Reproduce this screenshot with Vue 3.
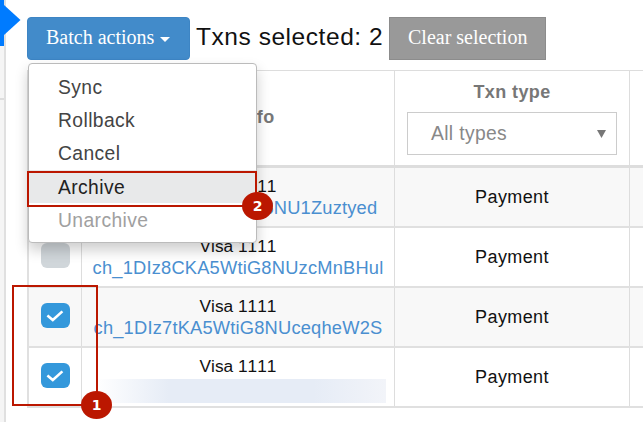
<template>
  <div class="page">
    <aside class="sidebar">
      <div class="sidebar-active"></div>
      <div class="sidebar-item"></div>
      <svg class="sidebar-arrow" width="17" height="30" viewBox="0 0 17 30">
        <path d="M0 0L16.5 15L0 30Z" fill="#007bff" />
      </svg>
    </aside>

    <main class="content">
      <div class="toolbar">
        <div class="batch">
          <button class="btn btn-primary">
            Batch actions <span class="caret"></span>
          </button>
          <ul class="menu">
            <li
              v-for="a in actions"
              :key="a.label"
              :class="{ active: a.active, disabled: a.disabled }"
            >
              {{ a.label }}
            </li>
          </ul>
          <div class="mark mark-archive"><span class="badge">2</span></div>
        </div>
        <span class="selected">Txns selected: {{ selectedCount }}</span>
        <button class="btn btn-clear">Clear selection</button>
      </div>

      <div class="table">
        <div class="row head">
          <div class="cell check"></div>
          <div class="cell info">Txn info</div>
          <div class="cell type">
            <span>Txn type</span>
            <div class="select">
              All types
              <svg width="9" height="8" viewBox="0 0 9 8">
                <path d="M0 0H9L4.5 8Z" fill="#777" />
              </svg>
            </div>
          </div>
          <div class="cell rest"></div>
        </div>
        <div v-for="(t, i) in txns" :key="i" class="row">
          <div class="cell check">
            <span class="checkbox" :class="{ checked: t.checked }">
              <svg v-if="t.checked" width="18" height="12" viewBox="0 0 18 12">
                <path d="M1.4 5.6L6.8 10L16.4 1.4" fill="none" stroke="#fff" stroke-width="2.6" />
              </svg>
            </span>
          </div>
          <div class="cell info">
            <span class="card">{{ t.card }}</span>
            <a v-if="t.id" class="link">{{ t.id }}</a>
            <span v-else class="redacted"></span>
          </div>
          <div class="cell type">{{ t.type }}</div>
          <div class="cell rest"></div>
        </div>
      </div>
    </main>

    <div class="mark mark-rows"><span class="badge">1</span></div>
  </div>
</template>

<script setup>
import { ref, computed } from "vue"

const actions = [
  { label: "Sync" },
  { label: "Rollback" },
  { label: "Cancel" },
  { label: "Archive", active: true },
  { label: "Unarchive", disabled: true }
]

const txns = ref([
  { card: "Visa 1111", id: "ch_1DIz8zKA5WtiG8NU1Zuztyed", type: "Payment", checked: false },
  { card: "Visa 1111", id: "ch_1DIz8CKA5WtiG8NUzcMnBHul", type: "Payment", checked: false },
  { card: "Visa 1111", id: "ch_1DIz7tKA5WtiG8NUceqheW2S", type: "Payment", checked: true },
  { card: "Visa 1111", id: "", type: "Payment", checked: true }
])

const selectedCount = computed(() => txns.value.filter(t => t.checked).length)
</script>

<style>
body {
  overflow: hidden;
}
</style>

<style scoped>
.page {
  position: relative;
  display: flex;
  width: 643px;
  height: 422px;
  overflow: hidden;
  background: #fff;
  font-family: "Liberation Sans", Arial, sans-serif;
  font-kerning: none;
  color: #111;
}

.page * {
  box-sizing: border-box;
}

/* Sidebar edge */
.sidebar {
  position: relative;
  flex: none;
  width: 6px;
  background: #f5f5f5;
  border-right: 2px solid #e0e0e0;
}

.sidebar-active {
  height: 46px;
  background: #007bff;
}

.sidebar-item {
  height: 54px;
  border-bottom: 2px solid #ddd;
}

.sidebar-arrow {
  position: absolute;
  left: 4px;
  top: 5px;
}

.content {
  flex: none;
  width: 637px;
  padding: 17px 0 0 21px;
}

/* Toolbar */
.toolbar {
  display: flex;
  height: 53px;
  align-items: flex-start;
}

.batch {
  position: relative;
}

.btn {
  display: flex;
  align-items: center;
  height: 43px;
  padding: 0 0 2px 18px;
  border: 1px solid #3d85c4;
  font: 20px "Liberation Serif", serif;
  color: #fff;
}

.btn-primary {
  width: 163px;
  border-radius: 4px;
  background: #428bca;
}

.caret {
  margin: 3px 0 0 6px;
  border: 5px solid transparent;
  border-top-color: #fff;
  border-bottom: 0;
}

.selected {
  width: 193px;
  margin-left: 6px;
  font-size: 24.5px;
  line-height: 39px;
  letter-spacing: 0.55px;
  white-space: nowrap;
}

.btn-clear {
  width: 157px;
  border-color: #8c8c8c;
  background: #999;
}

/* Dropdown */
.menu {
  position: absolute;
  z-index: 2;
  left: 1px;
  top: 46px;
  width: 229px;
  height: 180px;
  margin: 0;
  padding: 6px 0;
  list-style: none;
  background: #fff;
  border: 1px solid #bbb;
  border-radius: 4px;
  box-shadow: 0 7px 14px rgba(0, 0, 0, 0.2);
}

.menu li {
  height: 33.2px;
  padding-left: 29px;
  font-size: 19.3px;
  line-height: 35px;
  letter-spacing: 0.4px;
  color: #444;
}

.menu .active {
  background: #e8e9ea;
  color: #222;
}

.menu .disabled {
  color: #a0a0a0;
}

/* Table */
.table {
  border-top: 1px solid #ddd;
  border-left: 2px solid #e0e0e0;
}

.row {
  display: flex;
  height: 60px;
  border-bottom: 2px solid #e0e0e0;
  font-size: 18px;
}

.row:nth-child(even) {
  background: #f8f8f8;
}

.cell {
  display: flex;
  flex: none;
  flex-direction: column;
  align-items: center;
  justify-content: center;
  border-right: 1px solid #ddd;
}

.check {
  width: 53px;
  padding-bottom: 3px;
}

.info {
  width: 313px;
  padding-top: 2px;
}

.type {
  width: 235px;
  letter-spacing: 0.4px;
}

.rest {
  flex: 1;
  border-right: 0;
}

.head {
  height: 97px;
  border-bottom: 3px solid #ddd;
  font-weight: bold;
  letter-spacing: 0.4px;
  color: #777;
}

.head .info {
  padding: 0 0 2px;
}

.head .type {
  justify-content: flex-start;
  padding-top: 11px;
}

.select {
  display: flex;
  align-items: center;
  justify-content: space-between;
  width: 210px;
  height: 43px;
  margin-top: 9px;
  padding: 0 10px 0 23px;
  border: 1px solid #ccc;
  background: #fff;
  font-size: 19.3px;
  font-weight: normal;
  letter-spacing: 0.35px;
  color: #888;
}

.card {
  font-size: 17.3px;
  line-height: 20px;
}

.link {
  font-size: 18.3px;
  line-height: 24px;
  letter-spacing: 0.2px;
  color: #4a8fd0;
}

.redacted {
  width: 290px;
  height: 24px;
  margin: 3px 0 -3px 5px;
  background: linear-gradient(90deg, #fff, #e6ecf6 25%, #e6ecf6 75%, #f2f4f9);
}

.checkbox {
  display: flex;
  align-items: center;
  justify-content: center;
  width: 29px;
  height: 25px;
  border-radius: 6px;
  background: #d0d6da;
}

.checkbox.checked {
  background: #3498db;
}

/* Numbered callouts */
.mark {
  position: absolute;
  z-index: 3;
  border: 2px solid #bb1700;
}

.mark-archive {
  left: 0;
  top: 154px;
  width: 230px;
  height: 36px;
}

.mark-rows {
  left: 12px;
  top: 285px;
  width: 86px;
  height: 121px;
}

.badge {
  position: absolute;
  right: -17px;
  bottom: -15px;
  width: 31px;
  height: 28px;
  border-radius: 50%;
  background: #bb1700;
  color: #fff;
  font: bold 14px/28px "DejaVu Sans", sans-serif;
  text-align: center;
}

.mark-archive .badge {
  right: -18px;
}

.mark-rows .badge {
  right: -16px;
}
</style>
